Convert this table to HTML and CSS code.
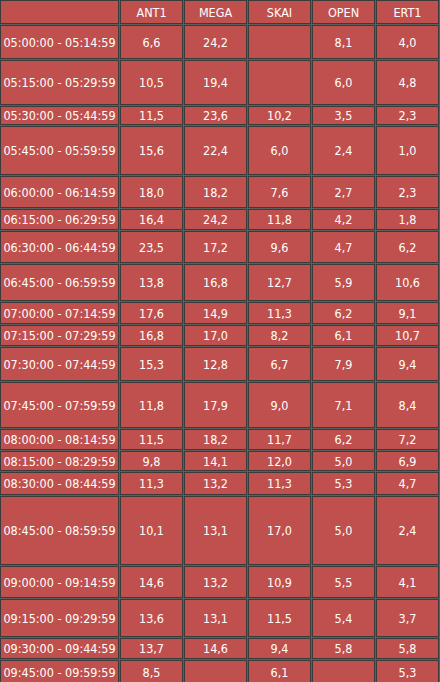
FILE: index.html
```html
<!DOCTYPE html>
<html>
<head>
<meta charset="utf-8">
<link rel="stylesheet" href="styles.css">
</head>
<body>
<div class="sheet">
  <div class="c"></div><div class="c">ANT1</div><div class="c">MEGA</div><div class="c">SKAI</div><div class="c">OPEN</div><div class="c">ERT1</div>
  <div class="c">05:00:00 - 05:14:59</div><div class="c">6,6</div><div class="c">24,2</div><div class="c"></div><div class="c">8,1</div><div class="c">4,0</div>
  <div class="c">05:15:00 - 05:29:59</div><div class="c">10,5</div><div class="c">19,4</div><div class="c"></div><div class="c">6,0</div><div class="c">4,8</div>
  <div class="c">05:30:00 - 05:44:59</div><div class="c">11,5</div><div class="c">23,6</div><div class="c">10,2</div><div class="c">3,5</div><div class="c">2,3</div>
  <div class="c">05:45:00 - 05:59:59</div><div class="c">15,6</div><div class="c">22,4</div><div class="c">6,0</div><div class="c">2,4</div><div class="c">1,0</div>
  <div class="c">06:00:00 - 06:14:59</div><div class="c">18,0</div><div class="c">18,2</div><div class="c">7,6</div><div class="c">2,7</div><div class="c">2,3</div>
  <div class="c">06:15:00 - 06:29:59</div><div class="c">16,4</div><div class="c">24,2</div><div class="c">11,8</div><div class="c">4,2</div><div class="c">1,8</div>
  <div class="c">06:30:00 - 06:44:59</div><div class="c">23,5</div><div class="c">17,2</div><div class="c">9,6</div><div class="c">4,7</div><div class="c">6,2</div>
  <div class="c">06:45:00 - 06:59:59</div><div class="c">13,8</div><div class="c">16,8</div><div class="c">12,7</div><div class="c">5,9</div><div class="c">10,6</div>
  <div class="c">07:00:00 - 07:14:59</div><div class="c">17,6</div><div class="c">14,9</div><div class="c">11,3</div><div class="c">6,2</div><div class="c">9,1</div>
  <div class="c">07:15:00 - 07:29:59</div><div class="c">16,8</div><div class="c">17,0</div><div class="c">8,2</div><div class="c">6,1</div><div class="c">10,7</div>
  <div class="c">07:30:00 - 07:44:59</div><div class="c">15,3</div><div class="c">12,8</div><div class="c">6,7</div><div class="c">7,9</div><div class="c">9,4</div>
  <div class="c">07:45:00 - 07:59:59</div><div class="c">11,8</div><div class="c">17,9</div><div class="c">9,0</div><div class="c">7,1</div><div class="c">8,4</div>
  <div class="c">08:00:00 - 08:14:59</div><div class="c">11,5</div><div class="c">18,2</div><div class="c">11,7</div><div class="c">6,2</div><div class="c">7,2</div>
  <div class="c">08:15:00 - 08:29:59</div><div class="c">9,8</div><div class="c">14,1</div><div class="c">12,0</div><div class="c">5,0</div><div class="c">6,9</div>
  <div class="c">08:30:00 - 08:44:59</div><div class="c">11,3</div><div class="c">13,2</div><div class="c">11,3</div><div class="c">5,3</div><div class="c">4,7</div>
  <div class="c">08:45:00 - 08:59:59</div><div class="c">10,1</div><div class="c">13,1</div><div class="c">17,0</div><div class="c">5,0</div><div class="c">2,4</div>
  <div class="c">09:00:00 - 09:14:59</div><div class="c">14,6</div><div class="c">13,2</div><div class="c">10,9</div><div class="c">5,5</div><div class="c">4,1</div>
  <div class="c">09:15:00 - 09:29:59</div><div class="c">13,6</div><div class="c">13,1</div><div class="c">11,5</div><div class="c">5,4</div><div class="c">3,7</div>
  <div class="c">09:30:00 - 09:44:59</div><div class="c">13,7</div><div class="c">14,6</div><div class="c">9,4</div><div class="c">5,8</div><div class="c">5,8</div>
  <div class="c">09:45:00 - 09:59:59</div><div class="c">8,5</div><div class="c"></div><div class="c">6,1</div><div class="c"></div><div class="c">5,3</div>
</div>
</body>
</html>
```
FILE: styles.css
```css
html, body {
  margin: 0;
  padding: 0;
  background: #56605f;
}
.sheet {
  display: grid;
  grid-template-columns: 119px repeat(5, 63px);
  grid-template-rows: 24px 34px 45px 19px 49px 32px 21px 32px 37px 22px 21px 34px 46px 21px 20px 23px 69px 32px 38px 21px 24px;
  column-gap: 1px;
  row-gap: 1px;
  width: 440px;
  background: #56605f;
}
.c {
  box-sizing: border-box;
  border: 1px solid #3b3b3b;
  background: #c0504d;
  color: #ffffff;
  font-family: "DejaVu Sans Condensed", "DejaVu Sans", sans-serif;
  font-stretch: condensed;
  font-size: 12.5px;
  display: flex;
  align-items: center;
  justify-content: center;
  white-space: nowrap;
}
```
